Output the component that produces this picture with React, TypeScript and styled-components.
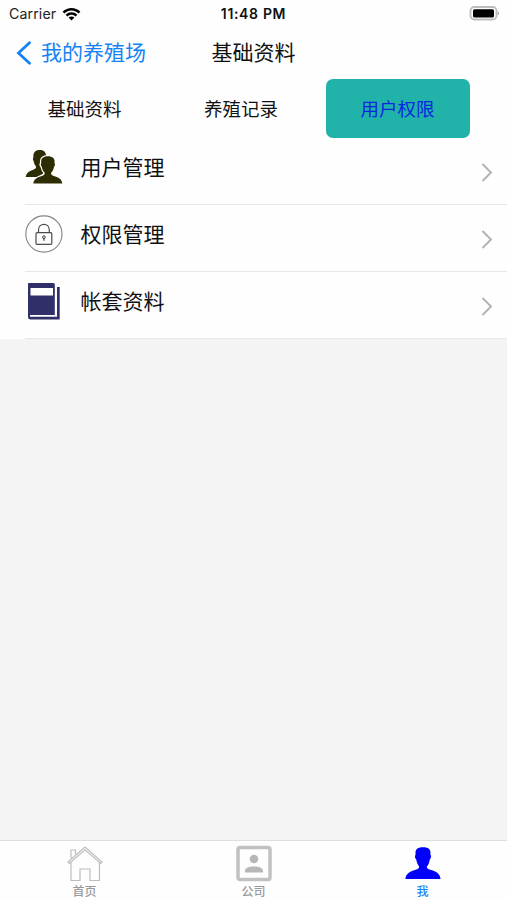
import React from "react";
import styled, { createGlobalStyle } from "styled-components";

const Global = createGlobalStyle`
  * { box-sizing: border-box; }
  body { margin: 0; background: #f4f4f4; font-family: Inter, "Noto Sans CJK SC", sans-serif; color: #111; }
  svg { display: block; flex: none; }
`;

const Screen = styled.div`
  height: 900px;
  width: 507px;
  display: flex;
  flex-direction: column;
  overflow: hidden;
  background: #f4f4f4;
`;

const StatusBar = styled.header`
  height: 27px;
  flex: none;
  display: grid;
  grid-template-columns: 1fr auto 1fr;
  align-items: center;
  padding: 0 7px 0 9px;
  background: #fefefe;
  line-height: 27px;
`;

const Carrier = styled.div`
  display: flex;
  align-items: center;
  gap: 6px;
  font-size: 14.2px;
  color: #222;
  letter-spacing: 0.1px;
`;

const Clock = styled.div`
  font-size: 14px;
  font-weight: 600;
  letter-spacing: 0.65px;
  margin-right: 2px;
`;

const Battery = styled.div`
  justify-self: end;
`;

const NavBar = styled.nav`
  height: 52px;
  flex: none;
  display: grid;
  grid-template-columns: 1fr auto 1fr;
  align-items: center;
  background: #fefefe;
  font-size: 21px;
  line-height: 50px;
`;

const Back = styled.button`
  display: flex;
  align-items: center;
  gap: 9px;
  height: 50px;
  padding: 0 0 0 16px;
  border: 0;
  background: none;
  font: inherit;
  color: #1582f5;
  white-space: nowrap;
`;

const Segments = styled.div`
  height: 59px;
  flex: none;
  display: grid;
  grid-template-columns: repeat(3, 144px);
  column-gap: 12.5px;
  padding-left: 13px;
  background: #fefefe;
`;

const Segment = styled.button<{ $active?: boolean }>`
  height: 59px;
  padding: 0 1px 2px 0;
  border: 0;
  border-radius: 7px;
  background: ${(p) => (p.$active ? "#21b2aa" : "transparent")};
  color: ${(p) => (p.$active ? "#0828e0" : "#111")};
  font: inherit;
  font-size: 18.5px;
`;

const List = styled.main`
  flex: none;
  background: #fefefe;
`;

const Row = styled.div`
  height: 67px;
  margin-left: 25px;
  padding-right: 14px;
  display: flex;
  align-items: center;
  border-bottom: 1px solid #e7e7e7;

  > svg {
    margin-top: 2px;
  }
`;

const RowIcon = styled.div`
  width: 38px;
  height: 38px;
  margin: -8px 17.5px 0 0;
`;

const RowLabel = styled.div`
  flex: 1;
  font-size: 21px;
  line-height: 30px;
  margin-top: -6px;
`;

const Spacer = styled.div`
  flex: 1;
`;

const TabBar = styled.footer`
  height: 60px;
  flex: none;
  display: grid;
  grid-template-columns: repeat(3, 1fr);
  background: #fefefe;
  border-top: 1px solid #dedede;
`;

const Tab = styled.div<{ $active?: boolean }>`
  display: flex;
  flex-direction: column;
  align-items: center;
  padding-top: 3px;
  gap: 2px;
  font-size: 12px;
  line-height: 16px;
  font-weight: 500;
  color: ${(p) => (p.$active ? "#1686f8" : "#999")};
`;

const Wifi = () => (
  <svg width="19" height="14" viewBox="0 0 19 14" fill="#000">
    <path d="M.6 4.7C5.6-.3 13.4-.3 18.4 4.7L16.6 6.5C12.6 2.6 6.4 2.6 2.4 6.5Z" />
    <path d="M3.6 7.7C6.9 4.4 12.1 4.4 15.4 7.7L13.6 9.5C11.3 7.3 7.7 7.3 5.4 9.5Z" />
    <path d="M6.6 10.6C8.2 9.1 10.8 9.1 12.4 10.6L9.5 13.6Z" />
  </svg>
);

const BatteryIcon = () => (
  <svg width="31" height="15" viewBox="0 0 31 15">
    <rect x="1.5" y="1" width="26" height="12.5" rx="3.8" fill="#fefefe" stroke="#bdbdbd" strokeWidth="1.8" />
    <rect x="4" y="3.2" width="21" height="8.2" rx="1.5" fill="#000" />
    <path d="M28.7 5.2C30.7 6.1 30.7 8.4 28.7 9.3Z" fill="#aaa" />
  </svg>
);

const Chevron = () => (
  <svg width="12" height="20" viewBox="0 0 12 20" fill="none" stroke="#b2b2b2" strokeWidth="1.9">
    <path d="M1.5 2L10 10.5L1.5 19" />
  </svg>
);

const Users = () => (
  <svg width="38" height="38" viewBox="0 0 38 38" fill="#2d2d03">
    <path d="M.7 29C1.2 25.2 4 23.3 7.6 22C10.2 21 11.4 20.2 11 18.4C9.6 17 9 15 8.7 13.2C7.6 11.8 7.7 10.3 8.4 9.6C7.9 4.6 10.2 2 14.8 2C19.4 2 21.5 4.6 21.1 9.6V24L14 29Z" />
    <path stroke="#fefefe" strokeWidth="2.6" paintOrder="stroke" d="M8.3 35.4C8.8 31.4 11.5 29.7 15.4 28.4C18.7 27.3 20 26.6 19.7 24.7C18 23.2 17.2 21 16.8 18.8C15.5 17.3 15.6 15.8 16.3 15C15.6 10.3 18.1 8.2 22.9 8.2C27.7 8.2 30.1 10.3 29.5 15C30.2 15.8 30.3 17.3 29 18.8C28.6 21 27.8 23.2 26.1 24.7C25.8 26.6 27 27.3 30.3 28.4C34.2 29.7 36.8 31.4 37.3 35.4Z" />
  </svg>
);

const Lock = () => (
  <svg width="38" height="38" viewBox="0 0 38 38" fill="none">
    <circle cx="18.9" cy="19" r="18.1" stroke="#858585" strokeWidth="1.1" />
    <g stroke="#4b4b4b" strokeWidth="1.2">
      <rect x="11" y="17.7" width="15.8" height="11.6" rx="1" />
      <path d="M13.5 17.5V15C13.5 7.5 24.3 7.5 24.3 15V17.5" />
    </g>
    <circle cx="18.9" cy="22.2" r="1.35" stroke="#333" strokeWidth="1" />
    <path d="M18.9 23.2V25.8" stroke="#333" strokeWidth="1.1" />
  </svg>
);

const Book = () => (
  <svg width="38" height="38" viewBox="0 0 38 38">
    <path fill="#302f69" fillRule="evenodd" d="M4 1H28.3Q29.8 1 29.8 2.5V33H5V34.7H32V5H34.7V37.5H5.4Q3 37.5 3 35V2Q3 1 4 1ZM5.5 6V13.5H28V6Z" />
  </svg>
);

const Home = () => (
  <svg width="36" height="38" viewBox="0 0 36 38" fill="none" stroke="#bdbdbd" strokeWidth="1.2">
    <path d="M1 18L18 3L35 18L33.7 19.5L18 5.7L2.3 19.5Z" />
    <path d="M4 18V36.5H13V25H23V36.5H32.5V18M4 14V6H8.5V10.5" />
  </svg>
);

const Company = () => (
  <svg width="36" height="38" viewBox="0 0 36 38" fill="none">
    <rect x="2" y="3.5" width="32" height="32" rx="2" stroke="#c1c1c1" strokeWidth="3.5" />
    <circle cx="18" cy="15" r="4.3" fill="#b7b7b7" />
    <path d="M9 28.5V26.8C9 21.2 27 21.2 27 26.8V28.5Z" fill="#b7b7b7" />
  </svg>
);

const Me = () => (
  <svg width="36" height="38" viewBox="0 0 36 38" fill="#0000fb">
    <path d="M.4 35C.6 29.7 5.3 27.5 10 26C13.3 25 14.3 24.2 14.1 22.6C12.2 20.5 11.8 18 11.2 15.6C9.6 14 9.8 11.5 10.6 10.5C10 5.5 12 3.2 18 3.2C24 3.2 26.1 5.7 25.4 10.5C26.3 11.6 26.3 14.2 24.8 15.6C24.4 18 23.7 20.6 21.9 22.6C21.6 24.2 22.7 25 26 26C31 27.5 35.2 29.7 35.5 35Z" />
  </svg>
);

const rows = [
  { label: "用户管理", Icon: Users },
  { label: "权限管理", Icon: Lock },
  { label: "帐套资料", Icon: Book },
];

const tabs = [
  { label: "首页", Icon: Home },
  { label: "公司", Icon: Company },
  { label: "我", Icon: Me, active: true },
];

export default function App() {
  return (
    <Screen>
      <Global />
      <StatusBar>
        <Carrier>Carrier<Wifi /></Carrier>
        <Clock>11:48 PM</Clock>
        <Battery><BatteryIcon /></Battery>
      </StatusBar>
      <NavBar>
        <Back>
          <svg width="16" height="24" viewBox="0 0 16 24" fill="none" stroke="#1582f5" strokeWidth="2.8" strokeLinecap="round">
            <path d="M13.5 1.7L2.5 12L13.5 22.3" />
          </svg>
          我的养殖场
        </Back>
        <div>基础资料</div>
      </NavBar>
      <Segments>
        <Segment>基础资料</Segment>
        <Segment>养殖记录</Segment>
        <Segment $active>用户权限</Segment>
      </Segments>
      <List>
        {rows.map(({ label, Icon }) => (
          <Row key={label}>
            <RowIcon><Icon /></RowIcon>
            <RowLabel>{label}</RowLabel>
            <Chevron />
          </Row>
        ))}
      </List>
      <Spacer />
      <TabBar>
        {tabs.map(({ label, Icon, active }) => (
          <Tab key={label} $active={active}>
            <Icon />
            {label}
          </Tab>
        ))}
      </TabBar>
    </Screen>
  );
}
